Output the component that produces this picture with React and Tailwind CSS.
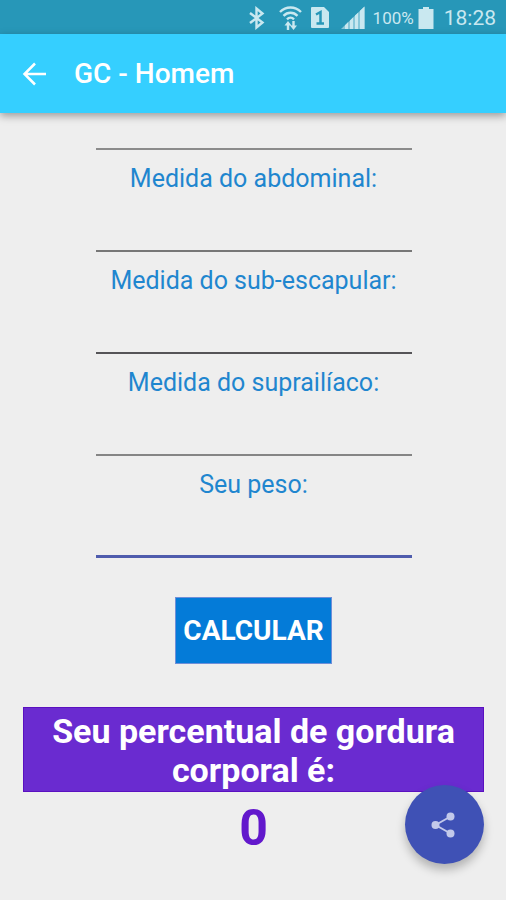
import { useState } from 'react';

const fields = [
  { id: 'abdominal', label: 'Medida do abdominal:', line: 'border-b-2 border-[#777777]' },
  { id: 'subescapular', label: 'Medida do sub-escapular:', line: 'border-b-2 border-[#555457]' },
  { id: 'suprailiaco', label: 'Medida do suprailíaco:', line: 'border-b-2 border-[#858585]' },
  { id: 'peso', label: 'Seu peso:', line: 'border-b-3 border-[#4f5cad]' },
];

function StatusBar() {
  return (
    <div className="flex h-[34px] items-center justify-end bg-[#2797b8] pt-px pr-[10px] text-[#c9e8f0]">
      {/* bluetooth */}
      <svg className="mr-3 h-6 w-5" viewBox="0 0 20 24" fill="none" stroke="currentColor" strokeWidth="2.4">
        <path d="M3 7 15.500 16.500 9.500 21.500v-19L15.500 7.500 3 17" />
      </svg>
      {/* wifi */}
      <svg className="mr-2 h-[26px] w-6" viewBox="0 0 24 26" fill="none" stroke="currentColor" strokeWidth="2.4">
        <path d="M1 7c6-6 15-6 21 0M4.500 10.800c4-4 10-4 14 0M8 14.300c2-2 5-2 7 0" />
        <path d="M9 25v-7M14.500 16v7" />
        <path d="M5.500 20.500h7L9 16zM11 20.500h7l-3.500 4.500z" fill="currentColor" stroke="none" />
      </svg>
      {/* sim card */}
      <svg className="mr-3 h-[22px] w-[18px]" viewBox="0 0 18 22">
        <path d="M1 0h12l5 5v15a1 1 0 0 1-1 1H1a1 1 0 0 1-1-1V1a1 1 0 0 1 1-1z" fill="currentColor" />
        <path d="M5 7.500 9.500 5v12M5.500 16.500h7.500" fill="none" stroke="#2797b8" strokeWidth="2.5" />
      </svg>
      {/* signal */}
      <svg className="mr-2 h-6 w-6" viewBox="0 0 24 24" fill="currentColor">
        <path d="M0 23 23.500 0.500V23z" opacity="0.6" />
        <path d="M4 19.200 7 16.300V23H4zM9 14.400l3-2.900V23H9zM14 9.600l3-2.900V23h-3zM19 4.800l4.500-4.300V23H19z" />
      </svg>
      <span className="mr-1 text-[17px] leading-6">100%</span>
      {/* battery */}
      <svg className="mr-[10px] h-[22px] w-4" viewBox="0 0 16 22" fill="currentColor">
        <path d="M5 0h6v2h4.500v20H0.500V2H5z" />
      </svg>
      <span className="text-[21px] leading-6">18:28</span>
    </div>
  );
}

export default function App() {
  const [values, setValues] = useState({});

  function handleChange(e) {
    setValues({ ...values, [e.target.name]: e.target.value });
  }

  return (
    <div className="flex min-h-screen flex-col bg-[#eeeeee] font-[Roboto,sans-serif]">
      <StatusBar />

      <header className="z-10 flex h-[79px] items-center bg-[#35cfff] pl-[22px] text-white shadow-[0_3px_8px_rgba(0,0,0,0.35)]">
        <button type="button" aria-label="Voltar" className="mr-7">
          <svg className="h-6 w-6" viewBox="0 0 24 24" fill="none" stroke="currentColor" strokeWidth="2.5">
            <path d="M24 12H3M13 1.500 2.500 12 13 22.500" />
          </svg>
        </button>
        <h1 className="text-[28px] leading-8 font-medium">GC - Homem</h1>
      </header>

      <main className="flex flex-col items-center pr-[22px] pl-[23px]">
        <form className="flex w-full max-w-[316px] flex-col items-center" onSubmit={(e) => e.preventDefault()}>
          <input
            type="text"
            name="peitoral"
            aria-label="Medida do peitoral"
            className="h-[37px] w-full border-b-2 border-[#8b8b8b] text-center text-[25px] outline-none"
            value={values.peitoral || ''}
            onChange={handleChange}
          />
          {fields.map((field) => (
            <div key={field.id} className="flex w-full flex-col">
              <label htmlFor={field.id} className="pt-[14px] text-center text-[25px] leading-[30px] whitespace-nowrap text-[#1f86cf]">
                {field.label}
              </label>
              <input
                type="text"
                id={field.id}
                name={field.id}
                className={`h-[58px] w-full text-center text-[25px] outline-none ${field.line}`}
                value={values[field.id] || ''}
                onChange={handleChange}
              />
            </div>
          ))}
          <button type="submit" className="mt-[39px] h-[67px] border border-[#6f8fd8] bg-[#047bd8] px-[7px] text-[28px] leading-8 font-bold text-white">
            CALCULAR
          </button>
        </form>

        <h2 className="mt-[43px] w-full border border-[#5a10c0] bg-[#6a2bd0] px-4 pt-1 pb-px text-center text-[34px] leading-[39px] font-bold text-white">
          Seu percentual de gordura corporal é:
        </h2>
        <p className="mt-2 text-center text-[50px] leading-[56px] font-bold text-[#6218cc]">0</p>
      </main>

      <button
        type="button"
        aria-label="Compartilhar"
        className="fixed right-[22px] bottom-9 z-20 flex size-[79px] items-center justify-center rounded-full bg-[#3f51b5] pr-1 text-[#c3c9ea] shadow-[0_6px_10px_rgba(0,0,0,0.25)]"
      >
        <svg className="h-[26px] w-6" viewBox="0 0 24 26" fill="currentColor">
          <path d="M4.500 13 19.500 4.500M4.500 13l15 8.500" stroke="currentColor" strokeWidth="2" />
          <circle cx="4.500" cy="13" r="4" />
          <circle cx="19.500" cy="4.500" r="4" />
          <circle cx="19.500" cy="21.500" r="4" />
        </svg>
      </button>
    </div>
  );
}
